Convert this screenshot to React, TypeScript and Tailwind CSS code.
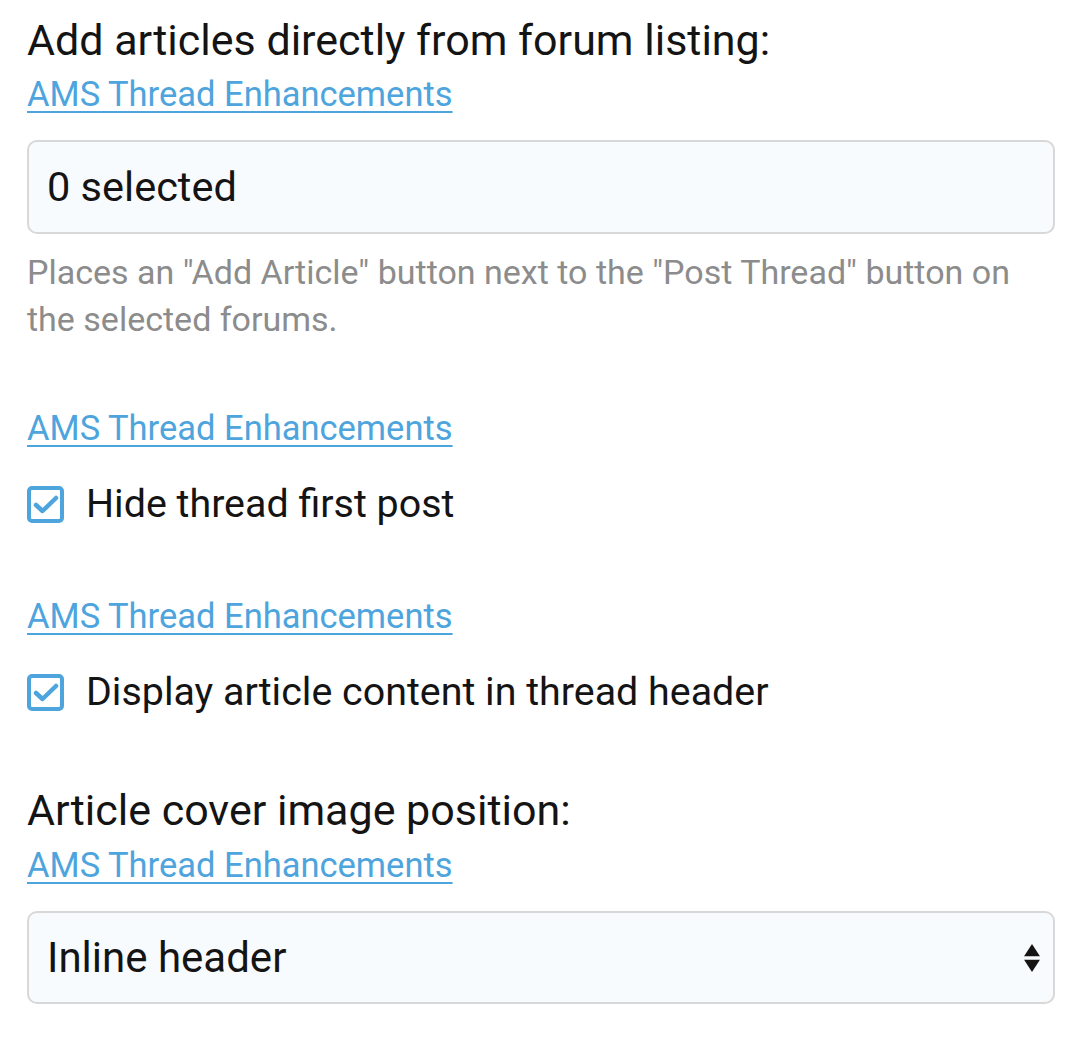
import React from 'react';

function CheckIcon() {
  return (
    <span className="flex h-[37px] w-[37px] shrink-0 items-center justify-center rounded-[5px] border-[4px] border-[#4ea4dd] bg-white">
      <svg viewBox="0 0 26 26" className="h-[26px] w-[26px]" fill="none" stroke="#4ea4dd" strokeWidth="4.5" strokeLinecap="round" strokeLinejoin="round">
        <path d="M3 14l6.5 6L23 7" />
      </svg>
    </span>
  );
}

function AddonLink({ className }: { className: string }) {
  return (
    <div className={`text-[34.5px] leading-[46px] ${className}`}>
      <a href="#" className="text-[#4ea4dd] underline underline-offset-[5px] decoration-[2px]">
        AMS Thread Enhancements
      </a>
    </div>
  );
}

export default function App() {
  return (
    <div className="min-h-[1045px] w-[1080px] bg-white pl-[27px] pr-[25px] pt-[12px] text-[#141414]" style={{ fontFamily: 'Roboto, "Liberation Sans", sans-serif' }}>
      <div className="text-[43px] leading-[56px]">Add articles directly from forum listing:</div>
      <AddonLink className="mt-[3px]" />
      <div className="mt-[23px] flex h-[94px] items-center rounded-[10px] border-2 border-[#d8d8d8] bg-[#f8fbfe] px-[18px] text-[41.5px]">
        0 selected
      </div>
      <p className="mt-[15px] pr-[22px] text-[34px] leading-[47px] text-[#8c8c8c]">
        Places an "Add Article" button next to the "Post Thread" button on the selected forums.
      </p>

      <AddonLink className="mt-[62px]" />
      <label className="mt-[29px] flex items-center gap-[22px] text-[39.4px] leading-[48px]">
        <CheckIcon />
        Hide thread first post
      </label>

      <AddonLink className="mt-[65px]" />
      <label className="mt-[29px] flex items-center gap-[22px] text-[39.4px] leading-[48px]">
        <CheckIcon />
        Display article content in thread header
      </label>

      <div className="mt-[66px] text-[43px] leading-[56px]">Article cover image position:</div>
      <AddonLink className="mt-[4px]" />
      <div className="mt-[23px] flex h-[93px] items-center justify-between rounded-[10px] border-2 border-[#d8d8d8] bg-[#f8fbfe] pl-[18px] pr-[12px] text-[42px]">
        <span>Inline header</span>
        <svg viewBox="0 0 20 34" className="h-[30px] w-[18px]" fill="#141414">
          <path d="M10 1L19 15H1z" />
          <path d="M1 19h18L10 33z" />
        </svg>
      </div>
    </div>
  );
}
